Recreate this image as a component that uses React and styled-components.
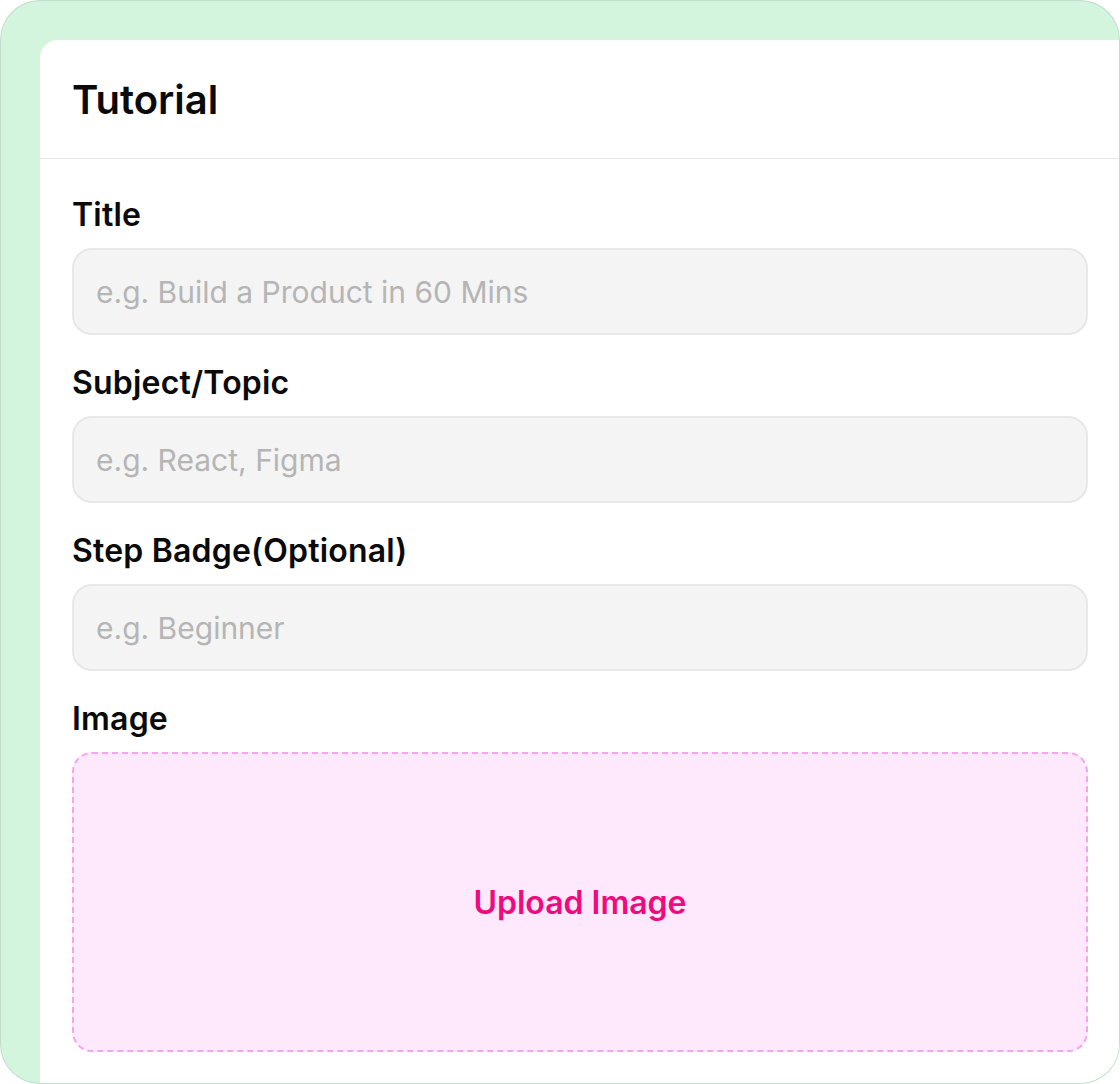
import styled, { createGlobalStyle } from "styled-components";

const GlobalStyle = createGlobalStyle`
  html, body {
    margin: 0;
    padding: 0;
    background: #ffffff;
  }
  * {
    box-sizing: border-box;
  }
`;

const fields = [
  { label: "Title", placeholder: "e.g. Build a Product in 60 Mins" },
  { label: "Subject/Topic", placeholder: "e.g. React, Figma" },
  { label: "Step Badge(Optional)", placeholder: "e.g. Beginner" },
];

const App = () => {
  return (
    <>
      <GlobalStyle />
      <Frame>
        <Panel>
          <Header>
            <Heading>Tutorial</Heading>
          </Header>
          <Form>
            {fields.map((f) => (
              <Field key={f.label}>
                <Label>{f.label}</Label>
                <Input placeholder={f.placeholder} />
              </Field>
            ))}
            <Field>
              <Label>Image</Label>
              <UploadBox type="button">Upload Image</UploadBox>
            </Field>
          </Form>
        </Panel>
      </Frame>
    </>
  );
};

const Frame = styled.div`
  width: 1120px;
  height: 1084px;
  background-color: #d3f5de;
  border: 1px solid rgba(0, 0, 0, 0.09);
  border-radius: 40px;
  overflow: hidden;
  padding: 39px 0 0 39px;
  display: flex;
  font-family: Inter, "Liberation Sans", sans-serif;
`;

const Panel = styled.div`
  flex: 1;
  background-color: #ffffff;
  border-top-left-radius: 18px;
  display: flex;
  flex-direction: column;
`;

const Header = styled.div`
  height: 119px;
  padding: 0 32px;
  display: flex;
  align-items: center;
  border-bottom: 1px solid #e6e6e6;
`;

const Heading = styled.h1`
  margin: 0;
  font-size: 40px;
  font-weight: 600;
  color: #0a0a0a;
`;

const Form = styled.div`
  flex: 1;
  display: flex;
  flex-direction: column;
  gap: 32px;
  padding: 40px 31px 31px 32px;
`;

const Field = styled.div`
  display: flex;
  flex-direction: column;
  gap: 17px;
  &:last-child {
    flex: 1;
  }
`;

const Label = styled.label`
  font-size: 32px;
  line-height: 32px;
  font-weight: 600;
  letter-spacing: 0.2px;
  color: #0a0a0a;
`;

const Input = styled.input`
  height: 87px;
  width: 100%;
  padding: 0 22px;
  border: 2px solid #e8e8e8;
  border-radius: 20px;
  background-color: #f4f4f4;
  font-family: inherit;
  font-size: 30px;
  color: #222;
  outline: none;
  &::placeholder {
    color: #b5b5b5;
  }
`;

const UploadBox = styled.button`
  flex: 1;
  width: 100%;
  border: 2px dashed #f4a6ec;
  border-radius: 20px;
  background-color: #fde9fb;
  color: #f00a80;
  font-family: inherit;
  font-size: 32px;
  font-weight: 600;
  cursor: pointer;
`;

export default App;
